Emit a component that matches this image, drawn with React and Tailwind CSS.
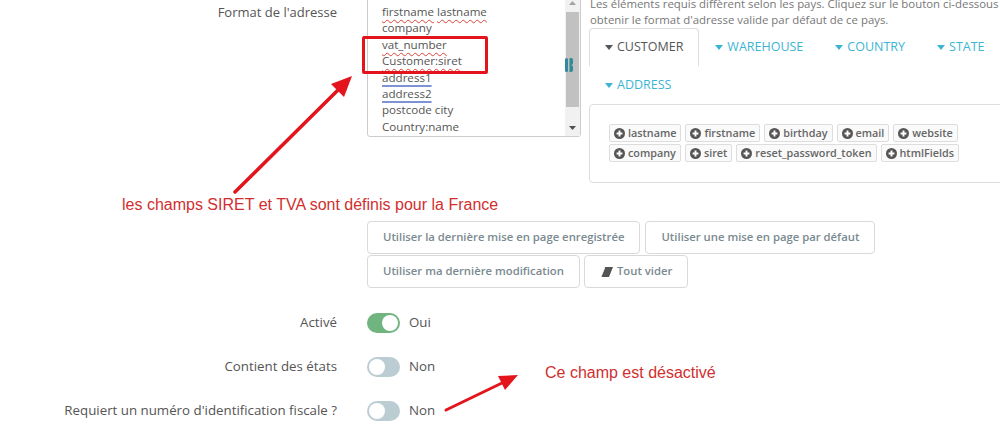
import React from "react";

function Caret() {
  return (
    <svg width="8" height="5" viewBox="0 0 8 5" className="mr-[4px] shrink-0">
      <path d="M0 0 H8 L4 5 Z" fill="currentColor" />
    </svg>
  );
}

function PlusCircle() {
  return (
    <svg width="11" height="11" viewBox="0 0 11 11" className="mr-[3px] shrink-0">
      <circle cx="5.5" cy="5.5" r="5.5" fill="#555" />
      <path d="M5.5 2.6 V8.4 M2.6 5.5 H8.4" stroke="#fff" strokeWidth="1.9" />
    </svg>
  );
}

function Eraser() {
  return (
    <svg width="13" height="10" viewBox="0 0 13 10" className="mr-[4px] shrink-0">
      <path d="M5 0 H13 L9 10 H1 Z" fill="#555" />
      <path d="M0.6 10 L4.4 0.5 L5.2 0.5 L1.4 10 Z" fill="#fff" />
    </svg>
  );
}

function Tag({ children }) {
  return (
    <div className="flex h-[18px] items-center rounded-[2px] border border-[#ddd] bg-[#fafafa] px-[4px] text-[10.8px] font-semibold text-[#666]">
      <PlusCircle />
      {children}
    </div>
  );
}

function Btn({ children }) {
  return (
    <div className="flex h-[33px] items-center rounded-[4px] border border-[#d9d9d9] bg-white px-[15px] text-[11.3px] font-semibold text-[#7a8a90]">
      {children}
    </div>
  );
}

function Switch({ on }) {
  return (
    <div
      className={
        on
          ? "flex h-[20px] w-[33px] items-center justify-end rounded-full bg-[#70b580] px-[2px]"
          : "flex h-[20px] w-[33px] items-center justify-start rounded-full bg-[#bbcdd2] px-[2px]"
      }
    >
      <div className="h-[16px] w-[16px] rounded-full bg-white" />
    </div>
  );
}

function SwitchRow({ label, on, text }) {
  return (
    <div className="flex h-[44px] items-center">
      <div className="w-[337px] shrink-0 text-right text-[13.3px] text-[#555]">{label}</div>
      <div className="ml-[30px]">
        <Switch on={on} />
      </div>
      <div className="ml-[9px] text-[13.3px] text-[#555]">{text}</div>
    </div>
  );
}

export default function App() {
  const wavy = "underline decoration-wavy decoration-[#e0413a] decoration-1 underline-offset-[3px]";
  const blue = "underline decoration-[#7d93d3] decoration-2 underline-offset-[3px]";
  return (
    <div className="relative h-[441px] w-[1000px] overflow-hidden bg-white font-['Open_Sans',sans-serif] text-[#555]">
      {/* Section 1: address format */}
      <div className="-mt-[6px] flex items-start">
        <div className="w-[337px] shrink-0 pt-[9px] text-right text-[13px] leading-[18px] text-[#555]">
          Format de l'adresse
        </div>
        <div className="relative ml-[30px] flex h-[143px] w-[214px] shrink-0 rounded-[3px] border border-[#ccc] bg-white">
          <div className="flex-1 pl-[14px] pt-[9px] text-[11.6px] leading-[16.4px] text-[#555]">
            <div>
              <span className={wavy}>firstname</span> <span className={wavy}>lastname</span>
            </div>
            <div>company</div>
            <div>
              <span className={wavy}>vat_number</span>
            </div>
            <div>
              <span className={wavy}>Customer:siret</span>
            </div>
            <div>
              <span className={blue}>address1</span>
            </div>
            <div>
              <span className={blue}>address2</span>
            </div>
            <div>postcode city</div>
            <div>Country:name</div>
          </div>
          <div className="flex w-[15px] shrink-0 flex-col bg-[#f1f1f1]">
            <div className="flex h-[16px] items-center justify-center">
              <svg width="7" height="4" viewBox="0 0 7 4">
                <path d="M0 4 H7 L3.5 0 Z" fill="#a3a3a3" />
              </svg>
            </div>
            <div className="mx-[1px] mt-[1px] h-[95px] bg-[#c1c1c1]" />
            <div className="flex-1" />
            <div className="flex h-[16px] items-center justify-center">
              <svg width="7" height="4" viewBox="0 0 7 4">
                <path d="M0 0 H7 L3.5 4 Z" fill="#505050" />
              </svg>
            </div>
          </div>
          <svg
            width="8"
            height="14"
            viewBox="0 0 8 14"
            className="absolute left-[197px] top-[63px]"
          >
            <rect x="0" y="0" width="3" height="14" rx="1.5" fill="#2f8a99" />
            <path d="M4.5 0 H6 A2 2 0 0 1 8 2 V5 A2 2 0 0 1 6 7 A2 2 0 0 1 8 9 V12 A2 2 0 0 1 6 14 H4.5 Z" fill="#2f8a99" />
          </svg>
        </div>
        <div className="ml-[8px] w-[440px] shrink-0 pt-[2px]">
          <div className="whitespace-nowrap pl-[1px] text-[11.4px] leading-[16px] text-[#777]">
            <div>Les éléments requis diffèrent selon les pays. Cliquez sur le bouton ci-dessous pour</div>
            <div>obtenir le format d'adresse valide par défaut de ce pays.</div>
          </div>
          <div className="flex flex-wrap text-[12.5px] uppercase">
            <div className="flex h-[38px] items-center rounded-t-[4px] border border-b-0 border-[#ddd] bg-white px-[15px] text-[#555]">
              <Caret />
              Customer
            </div>
            <div className="flex h-[38px] items-center px-[16px] text-[#3bb5d3]">
              <Caret />
              Warehouse
            </div>
            <div className="flex h-[38px] items-center px-[16px] text-[#3bb5d3]">
              <Caret />
              Country
            </div>
            <div className="flex h-[38px] items-center px-[16px] text-[#3bb5d3]">
              <Caret />
              State
            </div>
            <div className="flex h-[38px] items-center px-[16px] text-[#3bb5d3]">
              <Caret />
              Address
            </div>
          </div>
          <div className="h-[79px] rounded-[4px] border border-[#ddd] bg-white px-[19px] pt-[19px]">
            <div className="flex flex-col gap-[2px]">
              <div className="flex gap-[4px]">
                <Tag>lastname</Tag>
                <Tag>firstname</Tag>
                <Tag>birthday</Tag>
                <Tag>email</Tag>
                <Tag>website</Tag>
              </div>
              <div className="flex gap-[4px]">
                <Tag>company</Tag>
                <Tag>siret</Tag>
                <Tag>reset_password_token</Tag>
                <Tag>htmlFields</Tag>
              </div>
            </div>
          </div>
        </div>
      </div>

      {/* Annotation 1 */}
      <div className="mt-[13px] pl-[122px] font-['Liberation_Sans',Arial,sans-serif] text-[16px] leading-[18px] text-[#d12f2f]">
        les champs SIRET et TVA sont définis pour la France
      </div>

      {/* Buttons */}
      <div className="ml-[367px] mt-[7px] flex flex-col gap-[1px]">
        <div className="flex gap-[5px]">
          <Btn>Utiliser la dernière mise en page enregistrée</Btn>
          <Btn>Utiliser une mise en page par défaut</Btn>
        </div>
        <div className="flex gap-[4px]">
          <Btn>Utiliser ma dernière modification</Btn>
          <Btn>
            <Eraser />
            Tout vider
          </Btn>
        </div>
      </div>

      {/* Switches */}
      <div className="mt-[13px] flex flex-col">
        <SwitchRow label="Activé" on text="Oui" />
        <SwitchRow label="Contient des états" on={false} text="Non" />
        <SwitchRow label="Requiert un numéro d'identification fiscale ?" on={false} text="Non" />
      </div>

      {/* Overlays: annotations */}
      <div className="absolute left-[362px] top-[36px] h-[38px] w-[126px] rounded-[2px] border-[3px] border-[#e3141c]" />
      <div className="absolute left-[545px] top-[364px] font-['Liberation_Sans',Arial,sans-serif] text-[16px] leading-[18px] text-[#d12f2f]">
        Ce champ est désactivé
      </div>
      <svg className="pointer-events-none absolute left-0 top-0" width="1000" height="441" viewBox="0 0 1000 441">
        <line x1="235" y1="192" x2="338" y2="90" stroke="#e3141c" strokeWidth="3.5" strokeLinecap="round" />
        <polygon points="352,76 344,97 331,84" fill="#e3141c" />
        <line x1="446" y1="410" x2="502" y2="383" stroke="#e3141c" strokeWidth="3" strokeLinecap="round" />
        <polygon points="518,375 505,390 498,376" fill="#e3141c" />
      </svg>
    </div>
  );
}
